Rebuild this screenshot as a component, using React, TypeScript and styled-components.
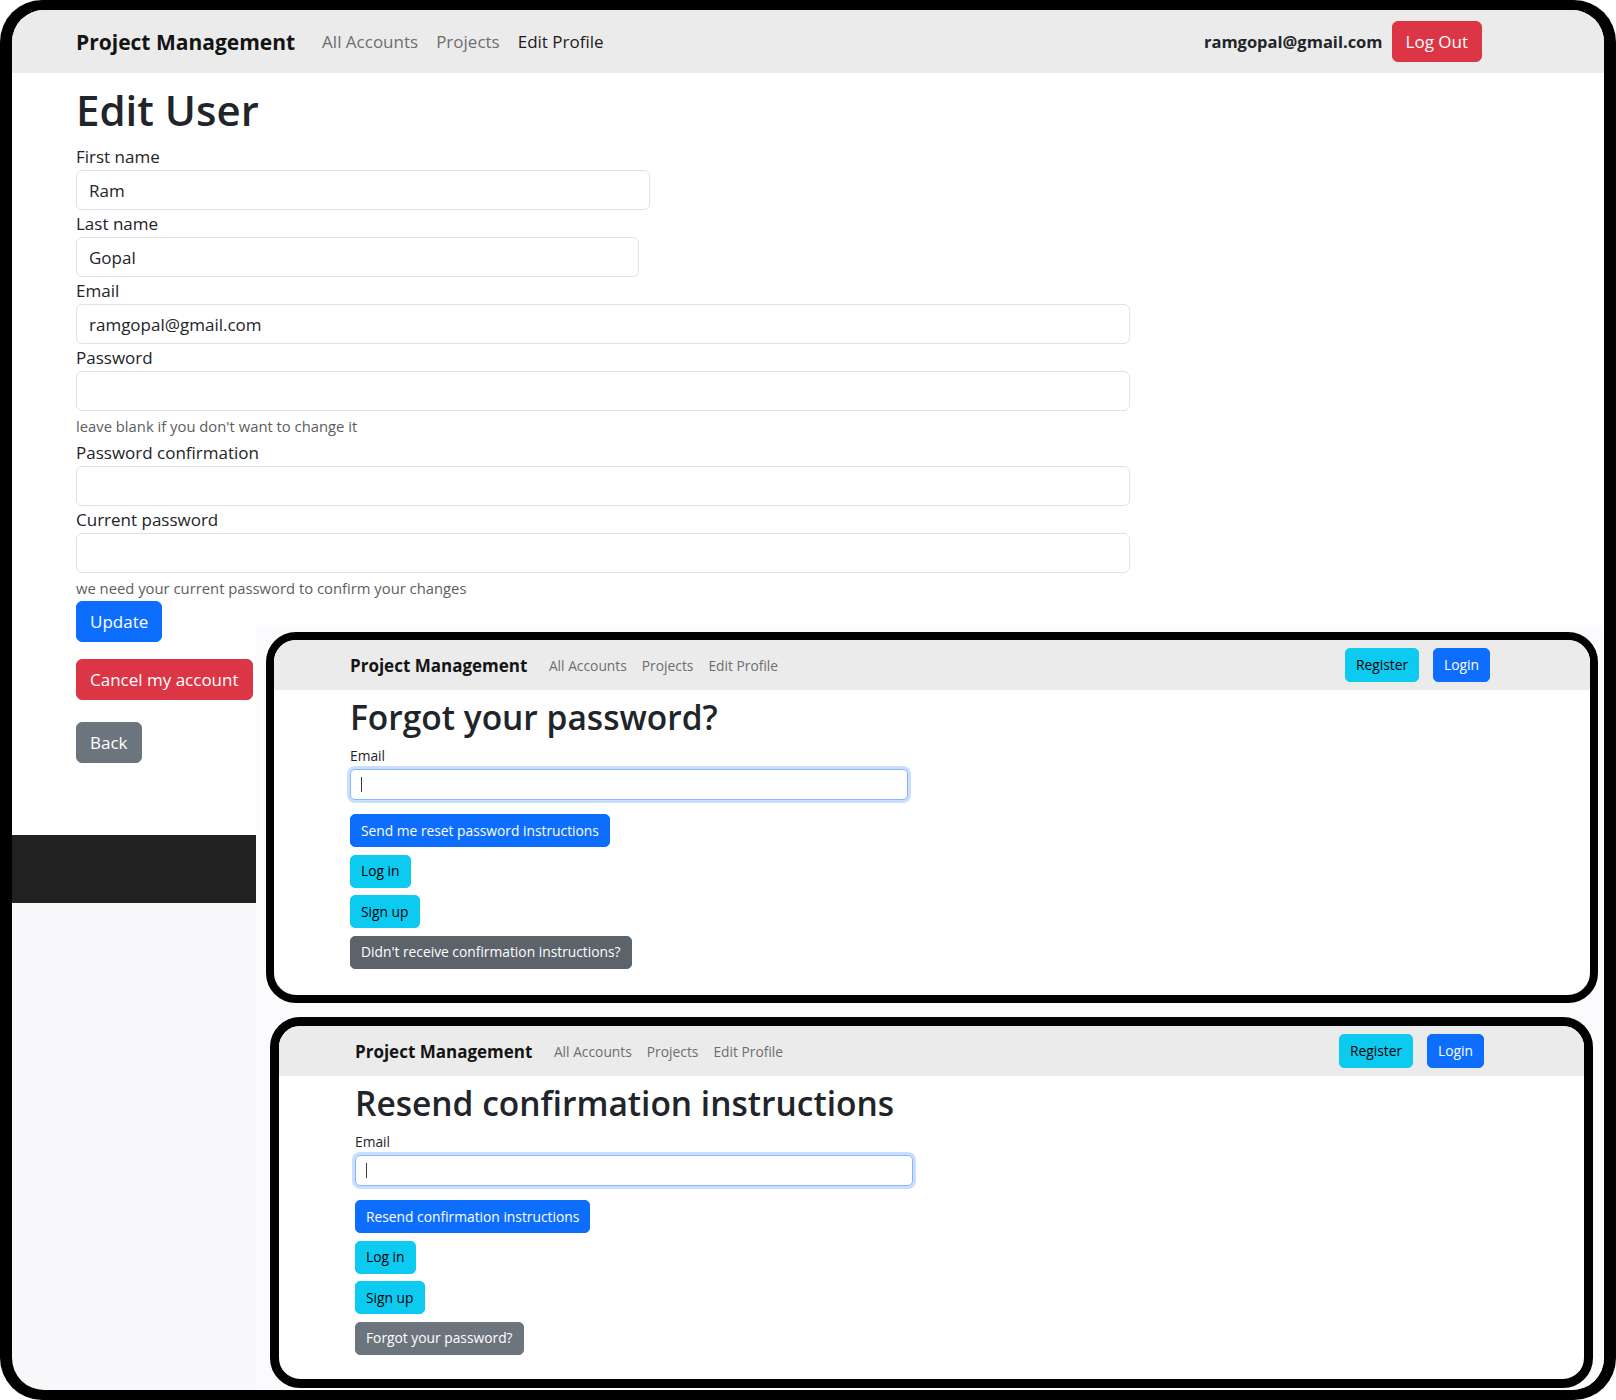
import React from "react";
import styled, { createGlobalStyle } from "styled-components";

const Global = createGlobalStyle`
  html, body { margin: 0; padding: 0; background: #ffffff; }
  body { font-family: "Open Sans", "Noto Sans", sans-serif; color: #212529; }
  *, *::before, *::after { box-sizing: border-box; }
`;

type Variant = "primary" | "info" | "danger" | "secondary" | "secondaryDark";
const palette: Record<Variant, { bg: string; fg: string }> = {
  primary: { bg: "#0d6efd", fg: "#ffffff" },
  info: { bg: "#0dcaf0", fg: "#000000" },
  danger: { bg: "#dc3545", fg: "#ffffff" },
  secondary: { bg: "#6c757d", fg: "#ffffff" },
  secondaryDark: { bg: "#5c636a", fg: "#ffffff" },
};

const Frame = styled.div`
  width: 1616px;
  height: 1400px;
  background: #000;
  border-radius: 42px;
  padding: 10px 12px 10px 12px;
`;

const Screen = styled.div`
  position: relative;
  height: 100%;
  border-radius: 32px;
  overflow: hidden;
  background: #f8f8fb;
  display: flex;
  flex-direction: column;
`;

const NavBar = styled.nav<{ $compact?: boolean }>`
  display: flex;
  align-items: center;
  flex: 0 0 auto;
  height: ${(p) => (p.$compact ? "50px" : "63px")};
  padding: ${(p) => (p.$compact ? "0 100px 0 76px" : "0 122px 0 64px")};
  background: #ebebeb;
`;

const Brand = styled.span<{ $compact?: boolean }>`
  font-weight: 700;
  font-size: ${(p) => (p.$compact ? "17px" : "21px")};
  color: #141414;
  margin-right: ${(p) => (p.$compact ? "14px" : "18px")};
  white-space: nowrap;
`;

const NavLink = styled.a<{ $compact?: boolean; $active?: boolean }>`
  padding: 0 ${(p) => (p.$compact ? "7.5px" : "9px")};
  font-size: ${(p) => (p.$compact ? "13.8px" : "17px")};
  color: ${(p) => (p.$active ? "#1c1c1c" : "#6e6e6e")};
  text-decoration: none;
  white-space: nowrap;
`;

const NavEnd = styled.div<{ $compact?: boolean }>`
  margin-left: auto;
  display: flex;
  align-items: center;
  gap: ${(p) => (p.$compact ? "14px" : "9px")};
`;

const UserEmail = styled.span`
  font-weight: 700;
  font-size: 16.5px;
  color: #212529;
`;

const Btn = styled.button<{ $variant: Variant; $size?: "md" | "sm" | "nav" }>`
  display: inline-flex;
  align-items: center;
  justify-content: center;
  flex: 0 0 auto;
  height: ${(p) => (p.$size === "sm" ? "33px" : p.$size === "nav" ? "34px" : "41px")};
  padding: 0 ${(p) => (p.$size === "md" || !p.$size ? "13px" : "10px")};
  font-family: inherit;
  font-size: ${(p) => (p.$size === "md" || !p.$size ? "17px" : "13.8px")};
  line-height: 1;
  border: 1px solid ${(p) => palette[p.$variant].bg};
  background: ${(p) => palette[p.$variant].bg};
  color: ${(p) => palette[p.$variant].fg};
  border-radius: ${(p) => (p.$size === "md" || !p.$size ? "6px" : "5px")};
  white-space: nowrap;
  cursor: pointer;
`;

const EditMain = styled.main`
  flex: 0 0 auto;
  background: #ffffff;
  display: flex;
  flex-direction: column;
  align-items: flex-start;
  padding: 0 0 72px 64px;
`;

const PageTitle = styled.h1`
  margin: 12px 0 8px;
  font-size: 42px;
  font-weight: 600;
  line-height: 50px;
  color: #212529;
`;

const FieldLabel = styled.label`
  display: block;
  font-size: 17px;
  line-height: 27px;
  color: #212529;
`;

const TextInput = styled.input<{ $width: number }>`
  display: block;
  width: ${(p) => p.$width}px;
  height: 40px;
  padding: 0 12px;
  font-family: inherit;
  font-size: 17px;
  color: #212529;
  background: #fff;
  border: 1px solid #dee2e6;
  border-radius: 6px;
  outline: none;
`;

const HelpText = styled.div`
  font-size: 14.8px;
  line-height: 22px;
  margin: 4px 0 2px;
  color: #5b5e61;
`;

const ButtonSlot = styled.div<{ $after: number }>`
  margin-bottom: ${(p) => p.$after}px;
`;

const DarkFooter = styled.footer`
  flex: 0 0 68px;
  background: #212121;
`;

const OverlayArea = styled.div`
  position: absolute;
  left: 244px;
  top: 615px;
  right: 0;
  bottom: 0;
  background: #fbfbfd;
  padding: 7px 0 0 10px;
  display: flex;
  flex-direction: column;
  gap: 14px;
`;

const Shot = styled.section<{ $border: number; $shift: number; $width: number }>`
  width: ${(p) => p.$width}px;
  height: 371px;
  margin-left: ${(p) => p.$shift}px;
  border: ${(p) => p.$border}px solid #000;
  border-radius: 30px;
  overflow: hidden;
  background: #ffffff;
  display: flex;
  flex-direction: column;
`;

const ShotBody = styled.div`
  display: flex;
  flex-direction: column;
  align-items: flex-start;
  padding-left: 76px;
`;

const MiniTitle = styled.h2`
  margin: 7px 0 7px;
  font-size: 33.5px;
  font-weight: 600;
  line-height: 41px;
  color: #212529;
  white-space: nowrap;
`;

const MiniLabel = styled.div`
  font-size: 13.8px;
  line-height: 22px;
  color: #212529;
`;

const MiniInput = styled.div`
  display: flex;
  align-items: center;
  width: 558px;
  height: 31px;
  margin: 2px 0 14px;
  padding-left: 10px;
  border: 1px solid #86b7fe;
  border-radius: 5px;
  box-shadow: 0 0 0 3px rgba(13, 110, 253, 0.22);
  background: #fff;
`;

const Caret = styled.span`
  width: 1px;
  height: 15px;
  background: #3a3a3a;
`;

const MiniActions = styled.div`
  display: flex;
  flex-direction: column;
  align-items: flex-start;
  gap: 7.5px;
`;

function MiniNav() {
  return (
    <NavBar $compact>
      <Brand $compact>Project Management</Brand>
      <NavLink $compact href="#">All Accounts</NavLink>
      <NavLink $compact href="#">Projects</NavLink>
      <NavLink $compact href="#">Edit Profile</NavLink>
      <NavEnd $compact>
        <Btn $variant="info" $size="nav">Register</Btn>
        <Btn $variant="primary" $size="nav">Login</Btn>
      </NavEnd>
    </NavBar>
  );
}

function DeviseShot(props: {
  title: string;
  submit: string;
  extra: string;
  extraVariant: Variant;
  border: number;
  shift: number;
  width: number;
}) {
  return (
    <Shot $border={props.border} $shift={props.shift} $width={props.width}>
      <MiniNav />
      <ShotBody>
        <MiniTitle>{props.title}</MiniTitle>
        <MiniLabel>Email</MiniLabel>
        <MiniInput role="textbox">
          <Caret />
        </MiniInput>
        <MiniActions>
          <Btn $variant="primary" $size="sm">{props.submit}</Btn>
          <Btn $variant="info" $size="sm">Log in</Btn>
          <Btn $variant="info" $size="sm">Sign up</Btn>
          <Btn $variant={props.extraVariant} $size="sm">{props.extra}</Btn>
        </MiniActions>
      </ShotBody>
    </Shot>
  );
}

export default function App() {
  return (
    <>
      <Global />
      <Frame>
        <Screen>
          <NavBar>
            <Brand>Project Management</Brand>
            <NavLink href="#">All Accounts</NavLink>
            <NavLink href="#">Projects</NavLink>
            <NavLink href="#" $active>Edit Profile</NavLink>
            <NavEnd>
              <UserEmail>ramgopal@gmail.com</UserEmail>
              <Btn $variant="danger">Log Out</Btn>
            </NavEnd>
          </NavBar>

          <EditMain>
            <PageTitle>Edit User</PageTitle>
            <FieldLabel>First name</FieldLabel>
            <TextInput $width={574} defaultValue="Ram" />
            <FieldLabel>Last name</FieldLabel>
            <TextInput $width={563} defaultValue="Gopal" />
            <FieldLabel>Email</FieldLabel>
            <TextInput $width={1054} defaultValue="ramgopal@gmail.com" />
            <FieldLabel>Password</FieldLabel>
            <TextInput $width={1054} type="password" />
            <HelpText>leave blank if you don't want to change it</HelpText>
            <FieldLabel>Password confirmation</FieldLabel>
            <TextInput $width={1054} type="password" />
            <FieldLabel>Current password</FieldLabel>
            <TextInput $width={1054} type="password" />
            <HelpText>we need your current password to confirm your changes</HelpText>
            <ButtonSlot $after={17}>
              <Btn $variant="primary">Update</Btn>
            </ButtonSlot>
            <ButtonSlot $after={22}>
              <Btn $variant="danger">Cancel my account</Btn>
            </ButtonSlot>
            <ButtonSlot $after={0}>
              <Btn $variant="secondary">Back</Btn>
            </ButtonSlot>
          </EditMain>
          <DarkFooter />

          <OverlayArea>
            <DeviseShot
              title="Forgot your password?"
              submit="Send me reset password instructions"
              extra="Didn't receive confirmation instructions?"
              extraVariant="secondaryDark"
              border={8}
              shift={0}
              width={1332}
            />
            <DeviseShot
              title="Resend confirmation instructions"
              submit="Resend confirmation instructions"
              extra="Forgot your password?"
              extraVariant="secondary"
              border={9}
              shift={4}
              width={1323}
            />
          </OverlayArea>
        </Screen>
      </Frame>
    </>
  );
}
